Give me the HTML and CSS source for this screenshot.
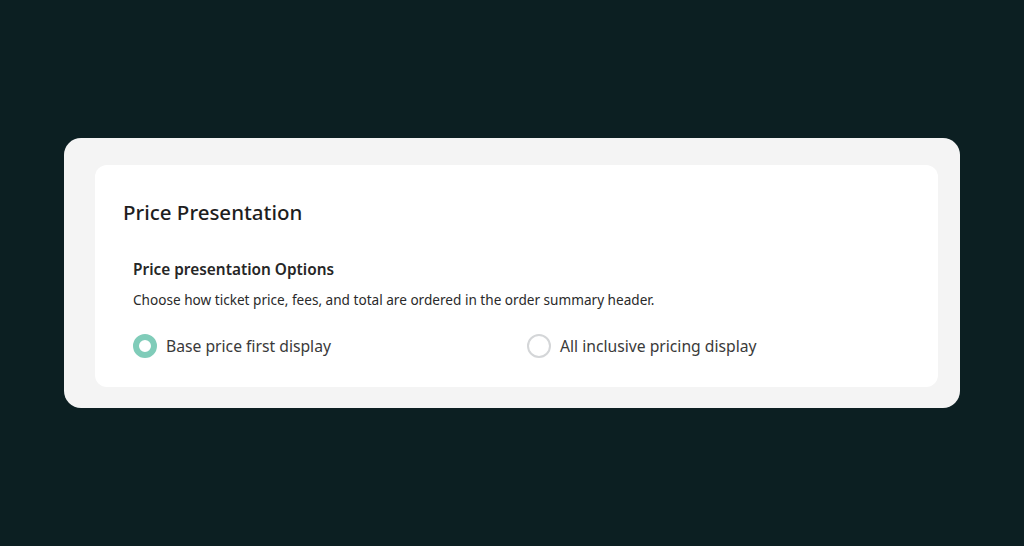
FILE: index.html
```html
<!DOCTYPE html>
<html lang="en">
<head>
<meta charset="utf-8">
<title>Price Presentation</title>
<link rel="stylesheet" href="styles.css">
</head>
<body>
  <div class="frame">
    <div class="card">
      <h1 class="title">Price Presentation</h1>
      <div class="section">
        <h2 class="subtitle">Price presentation Options</h2>
        <p class="desc">Choose how ticket price, fees, and total are ordered in the order summary header.</p>
        <div class="options">
          <label class="option">
            <span class="radio radio-on"></span>
            <span class="label">Base price first display</span>
          </label>
          <label class="option">
            <span class="radio"></span>
            <span class="label">All inclusive pricing display</span>
          </label>
        </div>
      </div>
    </div>
  </div>
</body>
</html>
```
FILE: styles.css
```css
html, body {
  margin: 0;
  padding: 0;
}
body {
  background: #0c1f22;
  min-height: 100vh;
  display: flex;
  align-items: center;
  justify-content: center;
  font-family: "Noto Sans", "Open Sans", sans-serif;
  color: #222;
}
.frame {
  width: 896px;
  box-sizing: border-box;
  background: #f4f4f4;
  border-radius: 17px;
  padding: 27px 22px 21px 31px;
}
.card {
  background: #ffffff;
  border-radius: 12px;
  padding: 33px 28px 29px 28px;
}
.title {
  margin: 0;
  font-size: 20.5px;
  line-height: 28px;
  font-weight: 500;
  color: #1e1e1e;
}
.section {
  padding-left: 10px;
  margin-top: 34px;
}
.subtitle {
  margin: 0;
  font-size: 15.4px;
  line-height: 20px;
  font-weight: 600;
  color: #262626;
}
.desc {
  margin: 11px 0 0 0;
  font-size: 13.6px;
  line-height: 18px;
  color: #2a2a2a;
}
.options {
  margin-top: 25px;
  display: grid;
  grid-template-columns: 394px 1fr;
}
.option {
  display: flex;
  align-items: center;
  gap: 9px;
  height: 24px;
}
.radio {
  width: 24px;
  height: 24px;
  box-sizing: border-box;
  border-radius: 50%;
  border: 2px solid #d4d6d8;
  background: #fff;
  flex: none;
}
.radio-on {
  border: 6px solid #80ccb9;
}
.label {
  font-size: 15.7px;
  line-height: 24px;
  color: #3a3a3a;
}
```
